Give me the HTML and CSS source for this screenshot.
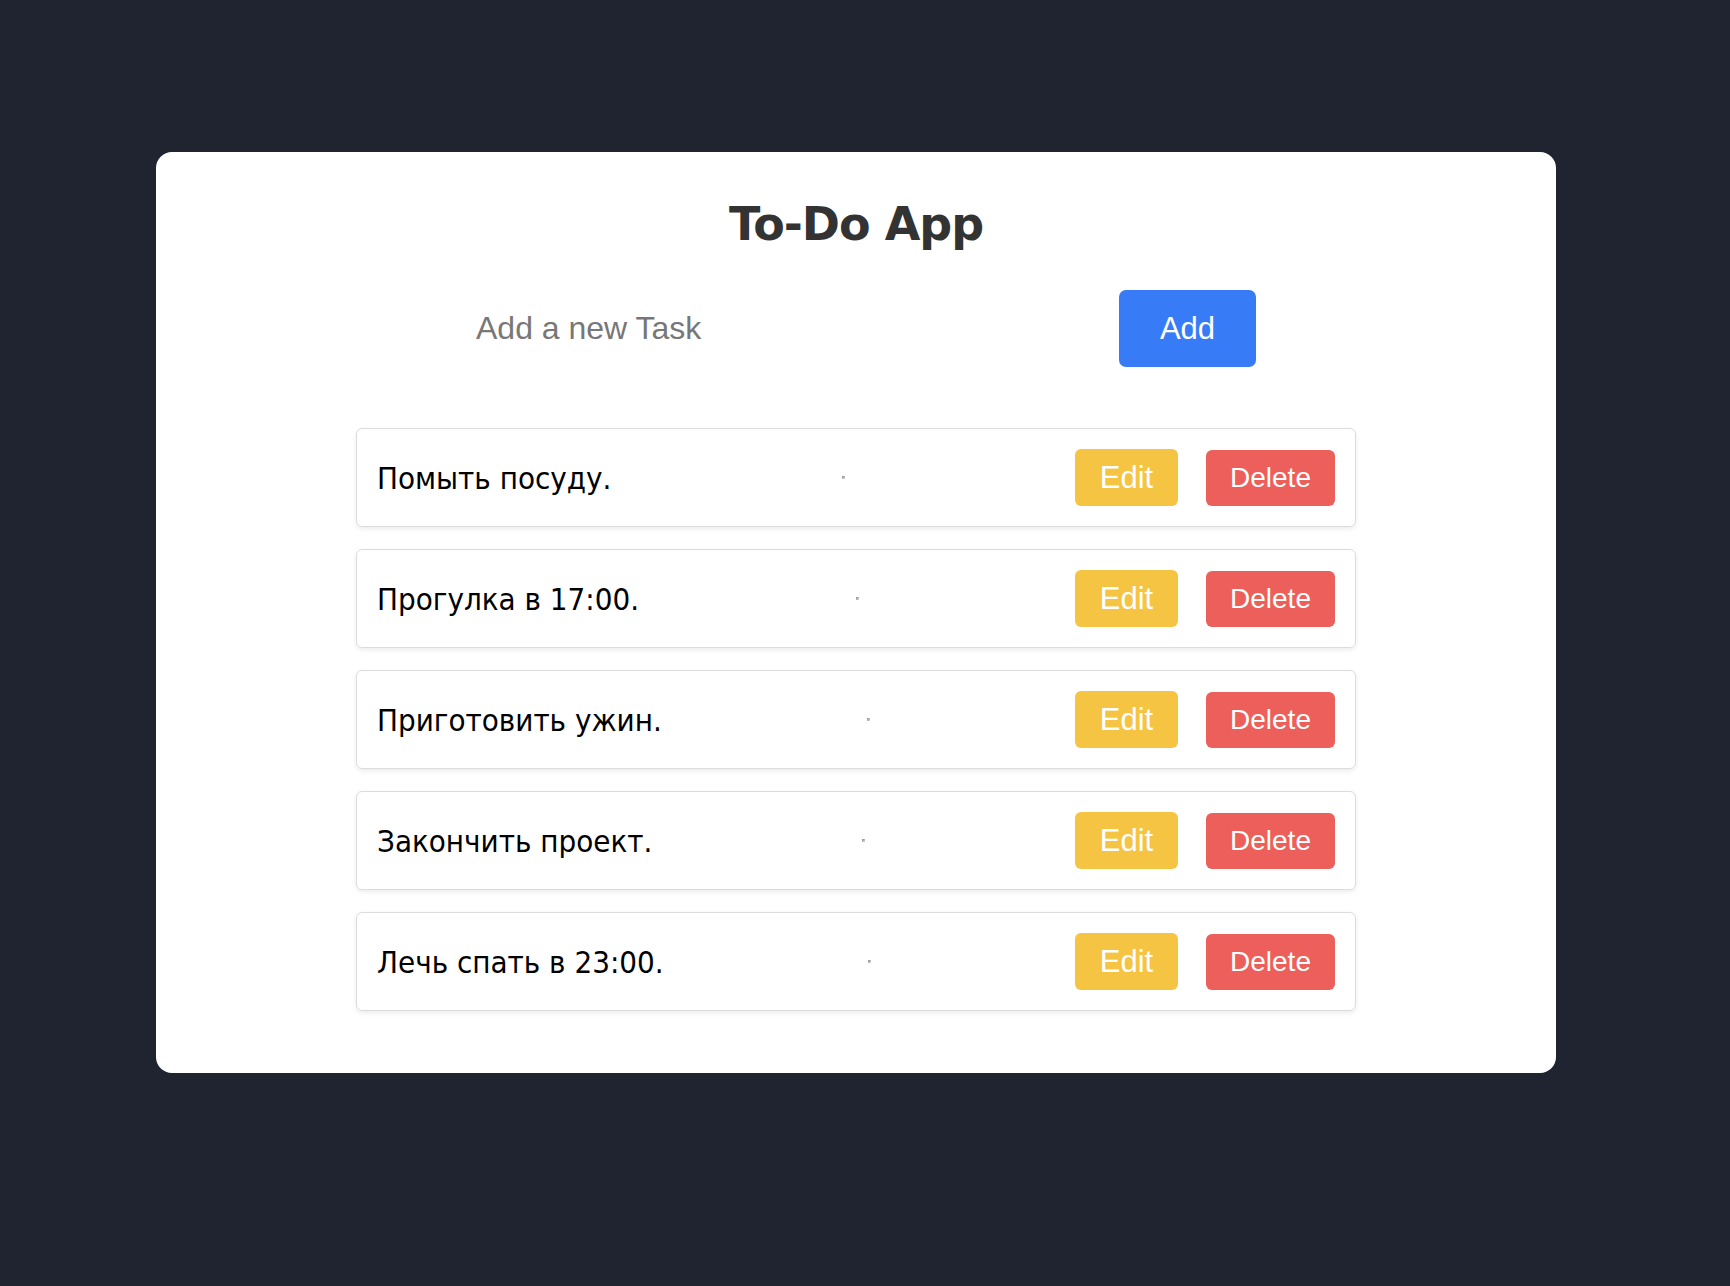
FILE: index.html
```html
<!DOCTYPE html>
<html lang="ru">
<head>
<meta charset="utf-8">
<title>To-Do App</title>
<link rel="stylesheet" href="styles.css">
</head>
<body>
<div class="app">
  <h1 class="title">To-Do App</h1>
  <form class="add-form" onsubmit="return false">
    <input class="add-input" type="text" placeholder="Add a new Task">
    <button class="btn btn-add" type="button">Add</button>
  </form>
  <ul class="list">
    <li class="item"><span class="item-text">Помыть посуду.</span><span class="mark"></span><div class="actions"><button class="btn btn-edit">Edit</button><button class="btn btn-delete">Delete</button></div></li>
    <li class="item"><span class="item-text">Прогулка в 17:00.</span><span class="mark"></span><div class="actions"><button class="btn btn-edit">Edit</button><button class="btn btn-delete">Delete</button></div></li>
    <li class="item"><span class="item-text">Приготовить ужин.</span><span class="mark"></span><div class="actions"><button class="btn btn-edit">Edit</button><button class="btn btn-delete">Delete</button></div></li>
    <li class="item"><span class="item-text">Закончить проект.</span><span class="mark"></span><div class="actions"><button class="btn btn-edit">Edit</button><button class="btn btn-delete">Delete</button></div></li>
    <li class="item"><span class="item-text">Лечь спать в 23:00.</span><span class="mark"></span><div class="actions"><button class="btn btn-edit">Edit</button><button class="btn btn-delete">Delete</button></div></li>
  </ul>
</div>
</body>
</html>
```

FILE: styles.css
```css
* { box-sizing: border-box; }

html, body {
  margin: 0;
  padding: 0;
  background: #1f2430;
  height: 100%;
}

body {
  padding: 152px 18px 0 0;
  font-family: "Liberation Sans", Arial, sans-serif;
}

.app {
  width: 1400px;
  margin: 0 auto;
  background: #ffffff;
  border-radius: 16px;
  padding: 40px 0 62px;
  display: flex;
  flex-direction: column;
  align-items: center;
}

.title {
  margin: 0;
  font-family: "DejaVu Sans", Verdana, sans-serif;
  font-weight: bold;
  font-size: 46px;
  line-height: 64px;
  color: #333333;
  letter-spacing: -1px;
}

.add-form {
  width: 800px;
  margin-top: 34px;
  display: flex;
  align-items: center;
}

.add-input {
  flex: 1;
  border: none;
  outline: none;
  background: transparent;
  font-family: "Liberation Sans", Arial, sans-serif;
  font-size: 32px;
  padding: 0 0 0 20px;
  height: 77px;
  color: #333;
}

.add-input::placeholder {
  color: #777777;
}

.btn {
  border: none;
  color: #ffffff;
  font-family: "Liberation Sans", Arial, sans-serif;
  cursor: pointer;
  border-radius: 6px;
  padding: 0;
}

.btn-add {
  width: 137px;
  height: 77px;
  background: #387bf7;
  font-size: 31px;
  border-radius: 7px;
}

.list {
  list-style: none;
  margin: 61px 0 0;
  padding: 0;
  width: 1000px;
  display: flex;
  flex-direction: column;
  gap: 22px;
}

.item {
  height: 99px;
  border: 1px solid #dcdcdc;
  border-radius: 6px;
  box-shadow: 0 2px 5px rgba(0, 0, 0, 0.08);
  padding: 0 20px;
  display: flex;
  align-items: center;
  justify-content: space-between;
}

.item-text {
  font-family: "DejaVu Sans Condensed", "DejaVu Sans", sans-serif;
  font-stretch: condensed;
  font-size: 31px;
  color: #000000;
}

.mark {
  width: 3px;
  height: 3px;
  background: linear-gradient(135deg, #8a8a8a, #dddddd);
}

.actions {
  display: flex;
  gap: 28px;
  align-items: center;
}

.btn-edit {
  width: 103px;
  height: 57px;
  background: #f6c443;
  font-size: 31px;
}

.btn-delete {
  width: 129px;
  height: 56px;
  background: #ed5f5b;
  font-size: 28px;
}
```
